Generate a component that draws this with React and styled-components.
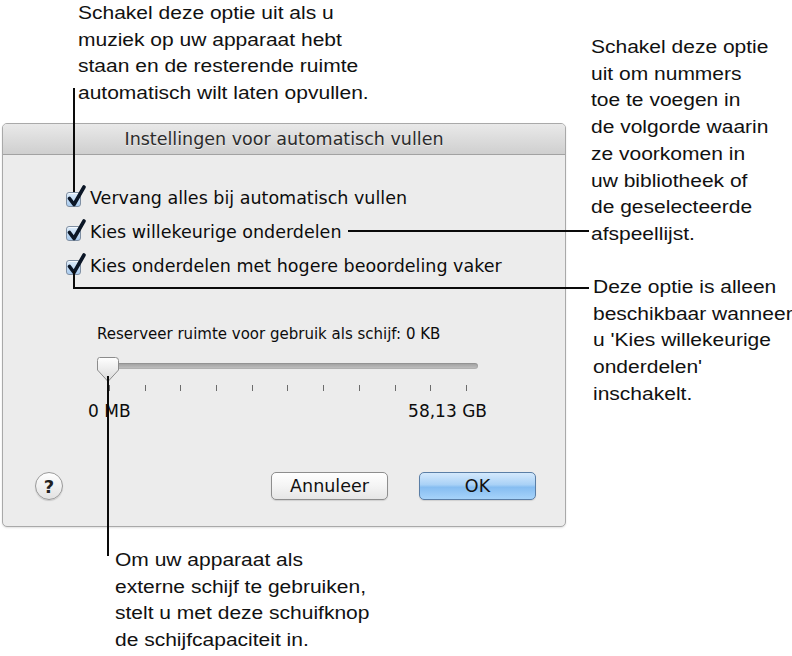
import React from 'react';
import styled, { createGlobalStyle } from 'styled-components';

const GlobalStyle = createGlobalStyle`
    html, body {
        margin: 0;
        padding: 0;
        background: #ffffff;
    }
`;

const options = [
    'Vervang alles bij automatisch vullen',
    'Kies willekeurige onderdelen',
    'Kies onderdelen met hogere beoordeling vaker',
];

const ticks = Array.from({ length: 11 });

function CheckMark() {
    return (
        <CheckSvg width="22" height="24" viewBox="0 0 22 24">
            <path d="M3.5 13.5 L8 19.5 L18 2" fill="none" stroke="#0b1626" strokeWidth="3.6"
                strokeLinecap="round" strokeLinejoin="round" />
        </CheckSvg>
    );
}

function Thumb() {
    return (
        <ThumbSvg width="24" height="26" viewBox="0 0 24 26">
            <defs>
                <linearGradient id="thumbFill" x1="0" y1="0" x2="0" y2="1">
                    <stop offset="0" stopColor="#ffffff" />
                    <stop offset="1" stopColor="#d8d8d8" />
                </linearGradient>
            </defs>
            <path d="M3.5 0.5 H19.5 Q22.5 0.5 22.5 3.5 V13 L12 24.5 L1.5 13 V3.5 Q1.5 0.5 3.5 0.5 Z"
                fill="url(#thumbFill)" stroke="#8c8c8c" strokeWidth="1" />
        </ThumbSvg>
    );
}

function App() {
    return (
        <Page>
            <GlobalStyle />
            <TopArea>
                <Note>
                    Schakel deze optie uit als u<br />
                    muziek op uw apparaat hebt<br />
                    staan en de resterende ruimte<br />
                    automatisch wilt laten opvullen.
                </Note>
            </TopArea>

            <Dialog>
                <TitleBar>Instellingen voor automatisch vullen</TitleBar>
                <Body>
                    <Options>
                        {options.map((label) => (
                            <OptionRow key={label}>
                                <Box>
                                    <CheckMark />
                                </Box>
                                <OptionLabel>{label}</OptionLabel>
                            </OptionRow>
                        ))}
                    </Options>
                    <SliderLabel>Reserveer ruimte voor gebruik als schijf: 0 KB</SliderLabel>
                    <SliderBox>
                        <Track />
                        <Thumb />
                        <Ticks>
                            {ticks.map((_, i) => <Tick key={i} />)}
                        </Ticks>
                    </SliderBox>
                    <Scale>
                        <span>0 MB</span>
                        <span>58,13 GB</span>
                    </Scale>
                    <Footer>
                        <HelpButton>?</HelpButton>
                        <Buttons>
                            <Button>Annuleer</Button>
                            <Button $primary>OK</Button>
                        </Buttons>
                    </Footer>
                </Body>
            </Dialog>

            <BottomArea>
                <Note>
                    Om uw apparaat als<br />
                    externe schijf te gebruiken,<br />
                    stelt u met deze schuifknop<br />
                    de schijfcapaciteit in.
                </Note>
            </BottomArea>

            <SideNote $top={34} $left={591}>
                <Note>
                    Schakel deze optie<br />
                    uit om nummers<br />
                    toe te voegen in<br />
                    de volgorde waarin<br />
                    ze voorkomen in<br />
                    uw bibliotheek of<br />
                    de geselecteerde<br />
                    afspeellijst.
                </Note>
            </SideNote>
            <SideNote $top={274} $left={593}>
                <Note>
                    Deze optie is alleen<br />
                    beschikbaar wanneer<br />
                    u 'Kies willekeurige<br />
                    onderdelen'<br />
                    inschakelt.
                </Note>
            </SideNote>

            <Leader $x={73} $y={88} $w={2} $h={104} />
            <Leader $x={348} $y={230} $w={241} $h={2} />
            <Leader $x={73} $y={271} $w={2} $h={18} />
            <Leader $x={73} $y={287} $w={516} $h={2} />
            <Leader $x={107} $y={376} $w={2} $h={180} />
        </Page>
    );
}

const Page = styled.div`
    position: relative;
    width: 792px;
    height: 656px;
    overflow: hidden;
    background: #ffffff;
`;

const TopArea = styled.div`
    height: 123px;
    padding-left: 78px;
    box-sizing: border-box;
`;

const BottomArea = styled.div`
    padding: 20px 0 0 115px;
`;

const Note = styled.div`
    font-family: "Liberation Sans", Arial, sans-serif;
    font-size: 17.5px;
    line-height: 26.7px;
    color: #111111;
    white-space: nowrap;
    transform: scaleX(1.2);
    transform-origin: left top;
`;

const SideNote = styled.div`
    position: absolute;
    top: ${(p) => p.$top}px;
    left: ${(p) => p.$left}px;
`;

const Leader = styled.div`
    position: absolute;
    left: ${(p) => p.$x}px;
    top: ${(p) => p.$y}px;
    width: ${(p) => p.$w}px;
    height: ${(p) => p.$h}px;
    background: #0a0a0a;
`;

const Dialog = styled.div`
    margin-left: 2px;
    width: 564px;
    height: 404px;
    box-sizing: border-box;
    border: 1px solid #a9a9a9;
    border-radius: 5px;
    background: #ececec;
    box-shadow: 0 1px 2px rgba(0, 0, 0, 0.12);
    display: flex;
    flex-direction: column;
    overflow: hidden;
    font-family: "DejaVu Sans", Verdana, sans-serif;
    color: #0c0c0c;
`;

const TitleBar = styled.div`
    height: 30px;
    flex: none;
    display: flex;
    align-items: center;
    justify-content: center;
    background: linear-gradient(#e9e9e9, #cfcfcf);
    border-bottom: 1px solid #a2a2a2;
    font-size: 17.5px;
    color: #2c2c2c;
    text-shadow: 0 1px 0 rgba(255, 255, 255, 0.6);
`;

const Body = styled.div`
    display: flex;
    flex-direction: column;
    flex: 1;
`;

const Options = styled.div`
    margin-top: 26px;
    padding-left: 63px;
    display: flex;
    flex-direction: column;
`;

const OptionRow = styled.div`
    height: 34px;
    display: flex;
    align-items: center;
    gap: 9px;
`;

const Box = styled.span`
    position: relative;
    width: 15px;
    height: 15px;
    box-sizing: border-box;
    border: 1px solid #7f8fa3;
    border-radius: 3px;
    background: linear-gradient(#dcebfa, #a9cbee);
    box-shadow: inset 0 1px 0 rgba(255, 255, 255, 0.7);
    margin-top: 3px;
`;

const CheckSvg = styled.svg`
    position: absolute;
    left: -1px;
    top: -8px;
`;

const OptionLabel = styled.span`
    font-size: 17.5px;
    line-height: 20px;
`;

const SliderLabel = styled.div`
    margin: 41px 0 0 94px;
    height: 20px;
    line-height: 20px;
    font-size: 15px;
`;

const SliderBox = styled.div`
    position: relative;
    margin: 12px 0 0 95px;
    width: 380px;
    height: 38px;
`;

const Track = styled.div`
    position: absolute;
    left: 0;
    right: 0;
    top: 7px;
    height: 6px;
    border-radius: 3px;
    background: linear-gradient(#9d9d9d, #c4c4c4);
    box-shadow: inset 0 0 0 1px rgba(0, 0, 0, 0.08);
`;

const ThumbSvg = styled.svg`
    position: absolute;
    left: -2px;
    top: 1px;
`;

const Ticks = styled.div`
    position: absolute;
    left: 11px;
    width: 358px;
    top: 29px;
    height: 6px;
    display: flex;
    justify-content: space-between;
`;

const Tick = styled.span`
    width: 1px;
    height: 6px;
    background: #6c6c6c;
`;

const Scale = styled.div`
    margin: 7px 0 0 85px;
    width: 399px;
    height: 20px;
    line-height: 20px;
    display: flex;
    justify-content: space-between;
    font-size: 17px;
`;

const Footer = styled.div`
    margin-top: 51px;
    height: 28px;
    display: flex;
    align-items: center;
    padding: 0 29px 0 32px;
`;

const HelpButton = styled.div`
    width: 28px;
    height: 28px;
    box-sizing: border-box;
    border-radius: 50%;
    border: 1px solid #9a9a9a;
    background: linear-gradient(#ffffff, #e2e2e2);
    box-shadow: 0 1px 1px rgba(0, 0, 0, 0.15);
    display: flex;
    align-items: center;
    justify-content: center;
    font-size: 18px;
    font-weight: bold;
    color: #222222;
`;

const Buttons = styled.div`
    margin-left: auto;
    display: flex;
    gap: 31px;
`;

const Button = styled.div`
    width: 117px;
    height: 28px;
    box-sizing: border-box;
    border-radius: 5px;
    border: 1px solid ${(p) => (p.$primary ? '#5a7ea6' : '#8e8e8e')};
    background: ${(p) => (p.$primary
        ? 'linear-gradient(#d4e9fc 0%, #a9d1f6 45%, #86bdf1 55%, #a6d3fa 100%)'
        : 'linear-gradient(#ffffff 0%, #f4f4f4 50%, #e6e6e6 100%)')};
    box-shadow: 0 1px 1px rgba(0, 0, 0, 0.12);
    display: flex;
    align-items: center;
    justify-content: center;
    font-size: 17.5px;
    color: #111111;
`;

export default App;
